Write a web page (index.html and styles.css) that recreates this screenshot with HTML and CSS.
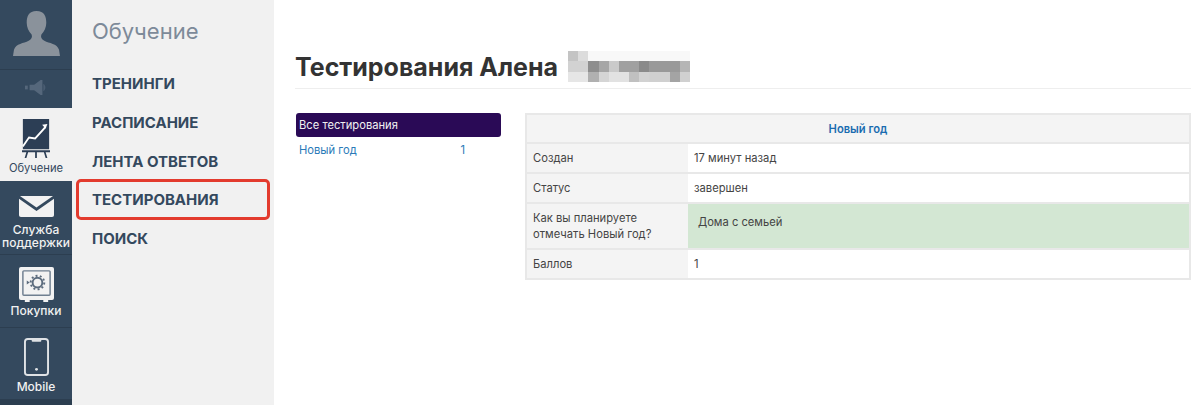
FILE: index.html
```html
<!DOCTYPE html>
<html lang="en">

<head>
    <meta charset="UTF-8">
    <title>Тестирования</title>
    <link rel="stylesheet" href="styles.css">
</head>

<body>
    <div class="layout">
        <nav class="rail">
            <div class="rail-avatar">
                <svg width="47" height="45" viewBox="0 0 48 50" preserveAspectRatio="none">
                    <path d="M24 0c-8 0-10 6-10 13 0 5 2 10 5 13 1 3 0 5-3 7-5 3-13 3-15 10l-1 7h48l-1-7c-2-7-10-7-15-10-3-2-4-4-3-7 3-3 5-8 5-13 0-7-2-13-10-13z" fill="#8a929b"/>
                </svg>
            </div>
            <div class="rail-sound">
                <svg width="22" height="15" viewBox="0 0 24 16" preserveAspectRatio="none">
                    <rect x="0" y="6" width="3" height="4" fill="#55677b"/>
                    <path d="M5 5h5l7-5h2v16h-2l-7-5H5z" fill="#55677b"/>
                    <path d="M20 4c3 2 3 6 0 8z" fill="#4a5d72"/>
                </svg>
            </div>
            <div class="rail-item rail-active">
                <svg width="28" height="39" viewBox="0 0 32 40" preserveAspectRatio="none">
                    <rect x="1" y="0" width="30" height="31" fill="#2c3e55"/>
                    <path d="M1 28l7-9 7 1 8-8 4-4" fill="none" stroke="#fff" stroke-width="2"/>
                    <path d="M29 5l-6 1 4 4z" fill="#fff"/>
                    <path d="M0 32h32v2H0zM5 34h2l-2 6H3zM15 34h2v6h-2zM25 34h2l2 6h-2z" fill="#2c3e55"/>
                </svg>
                <span>Обучение</span>
            </div>
            <div class="rail-item rail-support">
                <svg width="35" height="21" viewBox="0 0 36 24" preserveAspectRatio="none">
                    <path d="M1 0h34l-17 13z" fill="#f2f2f2"/>
                    <path d="M0 3l18 14L36 3v19a2 2 0 0 1-2 2H2a2 2 0 0 1-2-2z" fill="#f2f2f2"/>
                </svg>
                <span>Служба<br>поддержки</span>
            </div>
            <div class="rail-item rail-shop">
                <svg width="35" height="35" viewBox="0 0 36 36">
                    <rect x="0" y="0" width="36" height="34" rx="2" fill="#f2f2f2"/>
                    <rect x="4" y="4" width="28" height="25" rx="1" fill="none" stroke="#6f7f90" stroke-width="1.5"/>
                    <circle cx="19" cy="16" r="5" fill="none" stroke="#5b6b7d" stroke-width="2"/>
                    <circle cx="19" cy="16" r="7" fill="none" stroke="#5b6b7d" stroke-width="2" stroke-dasharray="2 2.4"/>
                    <path d="M8 14l3 2-3 2z" fill="#5b6b7d"/>
                    <path d="M6 34h5v2H6zM25 34h5v2h-5z" fill="#f2f2f2"/>
                </svg>
                <span>Покупки</span>
            </div>
            <div class="rail-item rail-mobile">
                <svg width="25" height="38" viewBox="0 0 26 40" preserveAspectRatio="none">
                    <rect x="1" y="1" width="24" height="38" rx="3" fill="none" stroke="#dfe2e5" stroke-width="2"/>
                    <path d="M8 1h10v2a1 1 0 0 1-1 1H9a1 1 0 0 1-1-1z" fill="#dfe2e5"/>
                    <circle cx="13" cy="33" r="1.5" fill="#dfe2e5"/>
                </svg>
                <span>Mobile</span>
            </div>
            <div class="rail-end"></div>
        </nav>

        <aside class="submenu">
            <div class="submenu-title">Обучение</div>
            <a class="submenu-link">ТРЕНИНГИ</a>
            <a class="submenu-link">РАСПИСАНИЕ</a>
            <a class="submenu-link">ЛЕНТА ОТВЕТОВ</a>
            <a class="submenu-link submenu-marked">ТЕСТИРОВАНИЯ</a>
            <a class="submenu-link">ПОИСК</a>
        </aside>

        <main class="content">
            <h1 class="page-title">
                Тестирования Алена
                <svg class="mosaic" width="122" height="31" viewBox="0 0 12 3" preserveAspectRatio="none" shape-rendering="crispEdges">
                    <rect width="12" height="3" fill="#f1f1f1"/>
                    <rect x="0" y="0" width="1" height="1" fill="#c4c4c4"/>
                    <rect x="1" y="0" width="1" height="1" fill="#dcdcdc"/>
                    <rect x="2" y="0" width="10" height="1" fill="#f8f8f8"/>
                    <rect x="0" y="1" width="2" height="1" fill="#d2d2d2"/>
                    <rect x="2" y="1" width="1" height="1" fill="#8e8e8e"/>
                    <rect x="3" y="1" width="1" height="1" fill="#a6a6a6"/>
                    <rect x="4" y="1" width="1" height="1" fill="#cacaca"/>
                    <rect x="5" y="1" width="2" height="1" fill="#a0a0a0"/>
                    <rect x="7" y="1" width="1" height="1" fill="#8a8a8a"/>
                    <rect x="8" y="1" width="3" height="1" fill="#999"/>
                    <rect x="11" y="1" width="1" height="1" fill="#b5b5b5"/>
                    <rect x="0" y="2" width="2" height="1" fill="#e6e6e6"/>
                    <rect x="2" y="2" width="1" height="1" fill="#b0b0b0"/>
                    <rect x="3" y="2" width="1" height="1" fill="#d5d5d5"/>
                    <rect x="4" y="2" width="2" height="1" fill="#e2e2e2"/>
                    <rect x="6" y="2" width="1" height="1" fill="#c0c0c0"/>
                    <rect x="7" y="2" width="1" height="1" fill="#d2d2d2"/>
                    <rect x="8" y="2" width="2" height="1" fill="#d0d0d0"/>
                    <rect x="10" y="2" width="1" height="1" fill="#a4a4a4"/>
                    <rect x="11" y="2" width="1" height="1" fill="#d0d0d0"/>
                </svg>
            </h1>
            <div class="columns">
                <div class="tests">
                    <div class="tests-head">Все тестирования</div>
                    <div class="tests-row">
                        <a>Новый год</a>
                        <a>1</a>
                    </div>
                </div>
                <table class="result">
                    <tr>
                        <th colspan="2"><a>Новый год</a></th>
                    </tr>
                    <tr>
                        <td class="label">Создан</td>
                        <td>17 минут назад</td>
                    </tr>
                    <tr>
                        <td class="label">Статус</td>
                        <td>завершен</td>
                    </tr>
                    <tr>
                        <td class="label">Как вы планируете отмечать Новый год?</td>
                        <td class="answer">Дома с семьей</td>
                    </tr>
                    <tr>
                        <td class="label">Баллов</td>
                        <td>1</td>
                    </tr>
                </table>
            </div>
        </main>
    </div>
</body>

</html>
```
FILE: styles.css
```css
html,
body {
    margin: 0;
    height: 405px;
    overflow: hidden;
}

body {
    font-family: Inter, "Noto Sans", sans-serif;
    color: #333;
    background-color: #fff;
}

.layout {
    display: flex;
    height: 405px;
}

.rail {
    width: 72px;
    flex-shrink: 0;
    display: flex;
    flex-direction: column;
    background-color: #34495e;
}

.rail-avatar {
    height: 70px;
    display: flex;
    justify-content: center;
    align-items: flex-end;
    padding-bottom: 13px;
    box-sizing: border-box;
    border-bottom: 1px solid #2c3e50;
}

.rail-sound {
    height: 39px;
    display: flex;
    justify-content: center;
    align-items: center;
    box-sizing: border-box;
    padding-bottom: 4px;
    border-bottom: 1px solid #f1f1f1;
}

.rail-item {
    display: flex;
    flex-direction: column;
    align-items: center;
    box-sizing: border-box;
    color: #f1f1f1;
    font-size: 12px;
    font-weight: 500;
    line-height: 13px;
    text-align: center;
    white-space: nowrap;
}

.rail-active {
    height: 72px;
    padding-top: 10px;
    gap: 4px;
    font-size: 11.2px;
    font-weight: 400;
    color: #34495e;
    background-color: #f1f1f1;
}

.rail-support {
    height: 74px;
    padding-top: 15px;
    gap: 6px;
    border-bottom: 1px solid #2c3e50;
}

.rail-shop {
    height: 73px;
    padding-top: 12px;
    gap: 2px;
    border-bottom: 1px solid #2c3e50;
}

.rail-mobile {
    height: 71px;
    padding-top: 10px;
    gap: 4px;
}

.rail-end {
    flex: 1;
    background-color: #2c3e50;
}

.submenu {
    width: 202px;
    flex-shrink: 0;
    box-sizing: border-box;
    padding: 17px 5px 0 5px;
    background-color: #f1f1f1;
}

.submenu-title {
    padding-left: 15px;
    margin-bottom: 18px;
    font-size: 22px;
    line-height: 29px;
    color: #7d8a99;
}

.submenu-link {
    display: block;
    box-sizing: border-box;
    height: 39px;
    padding-left: 15px;
    font-size: 15px;
    font-weight: 700;
    line-height: 39px;
    color: #34495e;
}

.submenu-marked {
    width: 194px;
    height: 41px;
    margin: -2px 0 -1px -1px;
    padding-left: 13px;
    line-height: 35px;
    border: 3px solid #e33b2e;
    border-radius: 5px;
}

.content {
    flex: 1;
    padding: 0 8px 0 22px;
}

.page-title {
    display: flex;
    align-items: center;
    gap: 10px;
    height: 89px;
    box-sizing: border-box;
    margin: 0 0 24px -1px;
    padding-top: 46px;
    font-size: 25px;
    font-weight: 700;
    color: #333;
    border-bottom: 1px solid #eee;
}

.mosaic {
    margin-top: -1px;
}

.columns {
    display: flex;
    gap: 24px;
    align-items: flex-start;
}

.tests {
    width: 205px;
    flex-shrink: 0;
    font-size: 11.2px;
}

.tests-head {
    height: 24px;
    padding-left: 3px;
    line-height: 25px;
    color: #f1f1f1;
    background-color: #2a0a56;
    border-radius: 3px;
}

.tests-row {
    display: flex;
    justify-content: space-between;
    padding: 1px 36px 0 3px;
    line-height: 25px;
    color: #2a7ab8;
}

.result {
    flex: 1;
    border-collapse: collapse;
    border: 2px solid #e8e8e8;
    font-size: 11.2px;
    line-height: 16px;
    color: #444;
}

.result th {
    height: 27px;
    padding: 0;
    font-weight: 600;
    color: #1a6cb0;
    background-color: #f4f4f4;
    border-bottom: 2px solid #e8e8e8;
}

.result td {
    height: 28px;
    padding: 0 6px;
    border-top: 2px solid #e8e8e8;
}

.result .label {
    width: 149px;
    background-color: #f4f4f4;
}

.result .answer {
    height: 36px;
    padding: 0 10px 8px;
    background-color: #d3e7d3;
}
```
